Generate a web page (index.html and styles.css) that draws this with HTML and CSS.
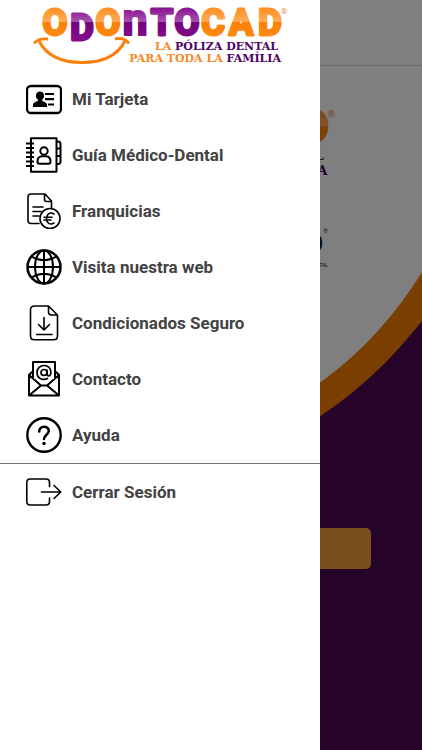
FILE: index.html
```html
<!DOCTYPE html>
<html lang="es">
<head>
<meta charset="utf-8">
<meta name="viewport" content="width=device-width, initial-scale=1">
<title>Odontocad</title>
<link rel="stylesheet" href="styles.css">
</head>
<body>
<main class="page" aria-hidden="true" inert>
  <svg class="backdrop" viewBox="0 0 422 750" preserveAspectRatio="xMaxYMin slice">
    <circle cx="84" cy="63" r="425" fill="#f57f00"/>
    <circle cx="97" cy="75" r="380" fill="#fff"/>
  </svg>
  <header class="topbar"></header>
  <section class="hero">
    <svg class="hero-logo" viewBox="33 0 260 71"><use href="#logo"/></svg>
    <p class="partner"><span class="partner-mark">D</span><sup>®</sup></p>
    <p class="partner-note">DENTAL</p>
  </section>
  <button class="enter" type="button" aria-label="Entrar"></button>
</main>
<div class="shade"></div>
<aside class="drawer">
  <svg class="logo" viewBox="0 0 320 71" role="img" aria-label="Odontocad">
    <defs>
      <linearGradient id="orange" gradientUnits="userSpaceOnUse" x1="0" y1="8" x2="0" y2="36">
        <stop offset="0" stop-color="#ff9022"/><stop offset=".48" stop-color="#ffab58"/>
        <stop offset=".52" stop-color="#fb7f05"/><stop offset="1" stop-color="#ff8a12"/>
      </linearGradient>
      <linearGradient id="purple" gradientUnits="userSpaceOnUse" x1="0" y1="8" x2="0" y2="36">
        <stop offset="0" stop-color="#8b1290"/><stop offset=".48" stop-color="#a650ae"/>
        <stop offset=".52" stop-color="#74047b"/><stop offset="1" stop-color="#800a87"/>
      </linearGradient>
      <g id="logo">
        <g class="letters">
          <text class="orange" x="55" y="35">O</text>
          <text class="purple" x="82" y="40">D</text>
          <text class="orange" x="108" y="35">O</text>
          <text class="purple arch" x="135" y="35">n</text>
          <text class="purple" x="162" y="35">T</text>
          <text class="purple" x="187" y="35">O</text>
          <text class="orange" x="213" y="35">C</text>
          <text class="orange" x="241" y="35">A</text>
          <text class="orange" x="270" y="35">D</text>
        </g>
        <text class="registered" x="281" y="14">®</text>
        <path d="M39 41Q50 62.500 82 62.500T125 41" fill="none" stroke="#fb7f0b" stroke-width="3"/>
        <path d="M34 43.500Q38 38 48 39M115 39Q124 37 129 43.500" fill="none" stroke="#fb7f0b" stroke-width="2.800"/>
        <text class="tagline" x="278" y="50"><tspan class="tag-orange">LA </tspan>PÓLIZA DENTAL</text>
        <text class="tagline" x="281" y="62"><tspan class="tag-orange">PARA TODA LA </tspan>FAMÍLIA</text>
      </g>
    </defs>
    <use href="#logo"/>
  </svg>
  <nav class="menu" aria-label="Principal">
    <a class="item" href="#tarjeta">
      <svg class="icon" viewBox="0 0 36 36"><rect x="1" y="5" width="34" height="27" rx="4" stroke-width="2.300"/><path d="M19 13h9M19 18.200h9M22 23.500h6" stroke-width="2.200"/><path d="M7 26v-2.500q0-2 4.800-3.500v-1.500C10 17 9.800 16 10 14.500c.2-3 1.800-4 4-4s4 1 4 4c.2 1.500-.2 2.500-1.700 4V20q4.700 1.500 4.700 3.500V26z" fill="#000" stroke="none"/></svg>
      <span>Mi Tarjeta</span>
    </a>
    <a class="item" href="#guia">
      <svg class="icon" viewBox="0 0 36 36"><path d="M5 1.300h25.500v33.400H5zM30.500 4.500h1.500q2.500 0 2.500 2.500v4.500h-4M34.500 11.500v7.500h-4M34.500 19v5.500q0 2.500-2.500 2.500h-1.500"/><path d="M0 6.500h8M0 11h8M0 15.500h8M0 20h8M0 24.500h8M0 29h8" stroke-width="1.900"/><circle cx="18" cy="14" r="3.700"/><path d="M16 19.200h4q4.500 0 4.500 5.500 0 2-2 2h-9q-2 0-2-2 0-5.500 4.500-5.500z"/></svg>
      <span>Guía Médico-Dental</span>
    </a>
    <a class="item" href="#franquicias">
      <svg class="icon thin" viewBox="0 0 36 36"><path d="M13 30.500H5q-3 0-3-3V4q0-3 3-3h14l6.500 7v7M18.500 1v5.500q0 2 2 2h5M7 14h10M7 18.500h8M7 23h6"/><circle cx="24" cy="25.500" r="10"/><path d="M28 21c-4-2.500-7.500 0-7.500 4.500s3.500 7 7.500 4.500M18 24.200h8M18 27h7"/></svg>
      <span>Franquicias</span>
    </a>
    <a class="item" href="#web">
      <svg class="icon" viewBox="0 0 36 36"><circle cx="18" cy="18" r="16.500" stroke-width="2.500"/><ellipse cx="18" cy="18" rx="9" ry="16.500"/><path d="M18 1.500v33M1.500 18h33M5.500 7.500Q18 15 30.500 7.500M5.500 28.500Q18 21 30.500 28.500"/></svg>
      <span>Visita nuestra web</span>
    </a>
    <a class="item" href="#condicionados">
      <svg class="icon thin" viewBox="0 0 36 36"><path d="M8.500 1H22.500L31.500 10v21q0 3.800-3.800 3.800H8.300q-3.800 0-3.800-3.800V5Q4.500 1 8.500 1zM22.500 1v6q0 3 3 3h6M18 12.500v12.500M12.500 19.500L18 25l5.500-5.500M10.500 29.500h15.500"/></svg>
      <span>Condicionados Seguro</span>
    </a>
    <a class="item" href="#contacto">
      <svg class="icon" viewBox="0 0 36 36"><path d="M7 18V1h22v17M7 10L3 14v20.500h30V14l-4-4M3 14l12 10.500h6L33 14M3 34.500l12-10M33 34.500l-12-10"/><circle cx="18" cy="11.500" r="3" stroke-width="1.700"/><path d="M21 8.500v4.500q0 1.800 1.800 1.800c3.400 0 3.200-10.300-4.800-10.300-4.200 0-7 3.200-7 7 0 6 6 8.500 11 5.800" stroke-width="1.700"/></svg>
      <span>Contacto</span>
    </a>
    <a class="item" href="#ayuda">
      <svg class="icon" viewBox="0 0 36 36"><circle cx="18" cy="18" r="16.700" stroke-width="2.400"/><path d="M13.200 14.500c0-6.500 9.600-6.200 9.600-.5 0 3.800-4.800 3.800-4.800 8" stroke-width="2.500" stroke-linecap="round"/><circle cx="18" cy="26.500" r="1.700" fill="#000" stroke="none"/></svg>
      <span>Ayuda</span>
    </a>
  </nav>
  <nav class="menu session" aria-label="Sesión">
    <a class="item" href="#salir">
      <svg class="icon thin" viewBox="0 0 36 36"><path d="M23.500 12.500V8.500q0-3.500-3.500-3.500H4Q.8 5 .8 8.500v19Q.8 31 4 31h16q3.500 0 3.500-3.500v-3.500M15.500 18h19M28 11.500L34.800 18 28 24.500"/></svg>
      <span>Cerrar Sesión</span>
    </a>
  </nav>
</aside>
</body>
</html>
```
FILE: styles.css
```css
* {
  box-sizing: border-box;
}

body {
  margin: 0;
  font-family: Roboto, "Liberation Sans", sans-serif;
  background: #4c0855;
}

/* Dimmed page behind the drawer */
.page {
  position: relative;
  min-height: 100vh;
  overflow: hidden;
  background: #4c0855;
}

.backdrop {
  position: absolute;
  inset: 0;
  width: 100%;
  height: 100%;
}

.topbar {
  position: relative;
  height: 66px;
  background: #fff;
  border-bottom: 1px solid #d8d8d8;
}

.hero {
  position: relative;
  height: 462px;
  padding: 34px 80px 0 28px;
}

.hero-logo {
  display: block;
  width: 100%;
}

.partner {
  display: flex;
  justify-content: flex-end;
  align-items: flex-start;
  margin: 42px 0 0;
  padding-right: 14px;
  color: #1c1c1c;
}

.partner-mark {
  font-size: 32px;
  font-weight: 900;
  line-height: 30px;
}

.partner sup {
  font-size: 6px;
  line-height: 6px;
}

.partner-note {
  margin: 4px 0 0;
  padding-right: 14px;
  font-size: 5px;
  line-height: 6px;
  text-align: right;
}

.enter {
  position: relative;
  display: block;
  width: calc(100% - 102px);
  height: 41px;
  margin: 0 auto;
  border: 0;
  border-radius: 5px;
  background: #f49e38;
}

.shade {
  position: fixed;
  inset: 0;
  background: rgba(0, 0, 0, 0.5);
}

/* Side drawer */
.drawer {
  position: fixed;
  inset: 0 auto 0 0;
  width: 320px;
  max-width: 85vw;
  overflow-y: auto;
  background: #fff;
}

.logo {
  display: block;
  width: 100%;
}

.letters {
  font: 700 36px Roboto, sans-serif;
  text-anchor: middle;
  stroke-width: 3;
  stroke-linejoin: round;
}

.letters .arch {
  font-size: 45px;
  stroke-width: 2;
}

.orange {
  fill: url(#orange);
  stroke: url(#orange);
}

.purple {
  fill: url(#purple);
  stroke: url(#purple);
}

.registered {
  font: 8px Roboto, sans-serif;
  fill: #e58a3c;
}

.tagline {
  font: 700 11px "DejaVu Serif", serif;
  text-anchor: end;
  fill: #4c0565;
}

.tag-orange {
  fill: #f58a2a;
}

.item {
  display: flex;
  align-items: center;
  gap: 10px;
  height: 56px;
  padding: 0 26px;
  color: #424242;
  font-size: 17px;
  font-weight: 700;
  line-height: 20px;
  text-decoration: none;
}

.icon {
  flex: none;
  width: 36px;
  height: 36px;
  fill: none;
  stroke: #000;
  stroke-width: 2;
  stroke-linejoin: round;
}

.thin {
  stroke-width: 1.6;
  stroke-linecap: round;
}

.session {
  border-top: 1px solid #757575;
}
```
